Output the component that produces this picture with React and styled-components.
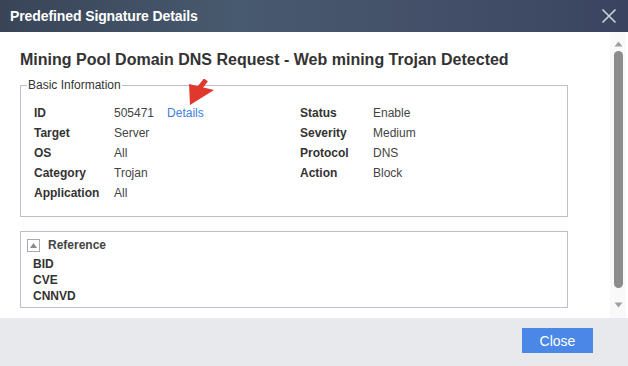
import styled, { createGlobalStyle } from 'styled-components';

const GlobalStyle = createGlobalStyle`
    html, body {
        margin: 0;
        padding: 0;
        background: #ffffff;
    }
    body {
        font-family: "Liberation Sans", Arial, sans-serif;
        color: #333333;
    }
`;

const basicInfo = [
    { label: 'ID', value: '505471', link: 'Details', label2: 'Status', value2: 'Enable' },
    { label: 'Target', value: 'Server', label2: 'Severity', value2: 'Medium' },
    { label: 'OS', value: 'All', label2: 'Protocol', value2: 'DNS' },
    { label: 'Category', value: 'Trojan', label2: 'Action', value2: 'Block' },
    { label: 'Application', value: 'All' },
];

const references = ['BID', 'CVE', 'CNNVD'];

const App = () => {
    return (
        <>
            <GlobalStyle />
            <Dialog>
                <TitleBar>
                    <Title>Predefined Signature Details</Title>
                    <CloseIcon width="16" height="16" viewBox="0 0 16 16">
                        <path d="M1.5 1.5 L14.5 14.5 M14.5 1.5 L1.5 14.5" stroke="#cfd3dc" strokeWidth="1.6" />
                    </CloseIcon>
                </TitleBar>
                <Body>
                    <Content>
                        <Heading>Mining Pool Domain DNS Request - Web mining Trojan Detected</Heading>
                        <InfoSet>
                            <Legend>Basic Information</Legend>
                            <InfoGrid>
                                {basicInfo.map(row => (
                                    <InfoRow key={row.label}>
                                        <Label>{row.label}</Label>
                                        <Value>
                                            {row.value}
                                            {row.link && (
                                                <DetailsLink href="#">
                                                    {row.link}
                                                    <Pointer width="30" height="30" viewBox="0 0 30 30">
                                                        <path d="M8 12 L17 1" stroke="#e0382c" strokeWidth="5" strokeLinecap="butt" />
                                                        <polygon points="1,26 0,5 25,11" fill="#e0382c" />
                                                    </Pointer>
                                                </DetailsLink>
                                            )}
                                        </Value>
                                        <Label>{row.label2}</Label>
                                        <Value>{row.value2}</Value>
                                    </InfoRow>
                                ))}
                            </InfoGrid>
                        </InfoSet>
                        <RefBox>
                            <RefHeader>
                                <Toggle>
                                    <svg width="9" height="7" viewBox="0 0 9 7">
                                        <polygon points="4.5,1 8,6 1,6" fill="#8a8a8a" />
                                    </svg>
                                </Toggle>
                                <RefTitle>Reference</RefTitle>
                            </RefHeader>
                            {references.map(r => (
                                <RefItem key={r}>{r}</RefItem>
                            ))}
                        </RefBox>
                    </Content>
                    <ScrollRail>
                        <svg width="9" height="6" viewBox="0 0 9 6">
                            <polygon points="4.5,0.5 8.5,5.5 0.5,5.5" fill="#a0a0a0" />
                        </svg>
                        <ScrollThumb />
                        <svg width="9" height="6" viewBox="0 0 9 6">
                            <polygon points="0.5,0.5 8.5,0.5 4.5,5.5" fill="#a0a0a0" />
                        </svg>
                    </ScrollRail>
                </Body>
                <Footer>
                    <CloseButton>Close</CloseButton>
                </Footer>
            </Dialog>
        </>
    );
};

const Dialog = styled.div`
    width: 628px;
    height: 366px;
    display: flex;
    flex-direction: column;
    overflow: hidden;
    background: #ffffff;
`;

const TitleBar = styled.div`
    height: 32px;
    flex: none;
    display: flex;
    align-items: center;
    justify-content: space-between;
    padding: 0 10px;
    box-sizing: border-box;
    background: linear-gradient(90deg, #394457 0%, #485a6f 38%, #434f68 70%, #3a4460 100%);
`;

const Title = styled.div`
    color: #ffffff;
    font-size: 14px;
    font-weight: bold;
    letter-spacing: -0.1px;
`;

const CloseIcon = styled.svg`
    display: block;
    margin-right: 1px;
`;

const Body = styled.div`
    flex: 1;
    display: flex;
    min-height: 0;
`;

const Content = styled.div`
    flex: 1;
    padding: 18px 42px 0 20px;
`;

const Heading = styled.h1`
    margin: 0 0 8px;
    font-size: 16px;
    line-height: 20px;
    font-weight: bold;
    color: #333333;
`;

const InfoSet = styled.fieldset`
    margin: 0;
    padding: 11px 13px 13px;
    border: 1px solid #bfbfc8;
    min-width: 0;
`;

const Legend = styled.legend`
    padding: 0 1px;
    margin-left: -7px;
    font-size: 12px;
    line-height: 14px;
    color: #333333;
`;

const InfoGrid = styled.div`
    display: flex;
    flex-direction: column;
`;

const InfoRow = styled.div`
    display: grid;
    grid-template-columns: 80px 186px 73px 1fr;
    height: 20px;
    align-items: center;
    font-size: 12px;
`;

const Label = styled.span`
    font-weight: bold;
    color: #333333;
`;

const Value = styled.span`
    color: #444444;
`;

const DetailsLink = styled.a`
    position: relative;
    margin-left: 13px;
    color: #3d7fe6;
    text-decoration: none;
`;

const Pointer = styled.svg`
    position: absolute;
    left: 22px;
    top: -27px;
    pointer-events: none;
`;

const RefBox = styled.div`
    margin-top: 14px;
    border: 1px solid #bfbfc8;
    padding: 5px 0 3px 12px;
`;

const RefHeader = styled.div`
    display: flex;
    align-items: center;
    height: 16px;
    margin-left: -6px;
    margin-bottom: 3px;
`;

const Toggle = styled.span`
    width: 11px;
    height: 11px;
    border: 1px solid #a8a8b0;
    display: flex;
    align-items: center;
    justify-content: center;
    margin-right: 8px;
`;

const RefTitle = styled.span`
    font-size: 12px;
    font-weight: bold;
    color: #444444;
`;

const RefItem = styled.div`
    font-size: 12px;
    line-height: 16px;
    font-weight: bold;
    color: #333333;
`;

const ScrollRail = styled.div`
    width: 16px;
    margin-right: 2px;
    flex: none;
    background: #f9f9f9;
    display: flex;
    flex-direction: column;
    align-items: center;
    padding: 9px 0 10px;
    gap: 4px;
`;

const ScrollThumb = styled.div`
    width: 9px;
    flex: 1;
    margin: 0 0 10px;
    border-radius: 5px;
    background: #8c8c8c;
`;

const Footer = styled.div`
    height: 48px;
    flex: none;
    background: #e8e9ed;
    display: flex;
    align-items: flex-start;
    justify-content: flex-end;
    padding: 10px 35px 0 0;
    box-sizing: border-box;
`;

const CloseButton = styled.button`
    width: 71px;
    height: 25px;
    border: none;
    background: #4a87e6;
    color: #ffffff;
    font-family: "Liberation Sans", Arial, sans-serif;
    font-size: 14px;
    cursor: pointer;
`;

export default App;
